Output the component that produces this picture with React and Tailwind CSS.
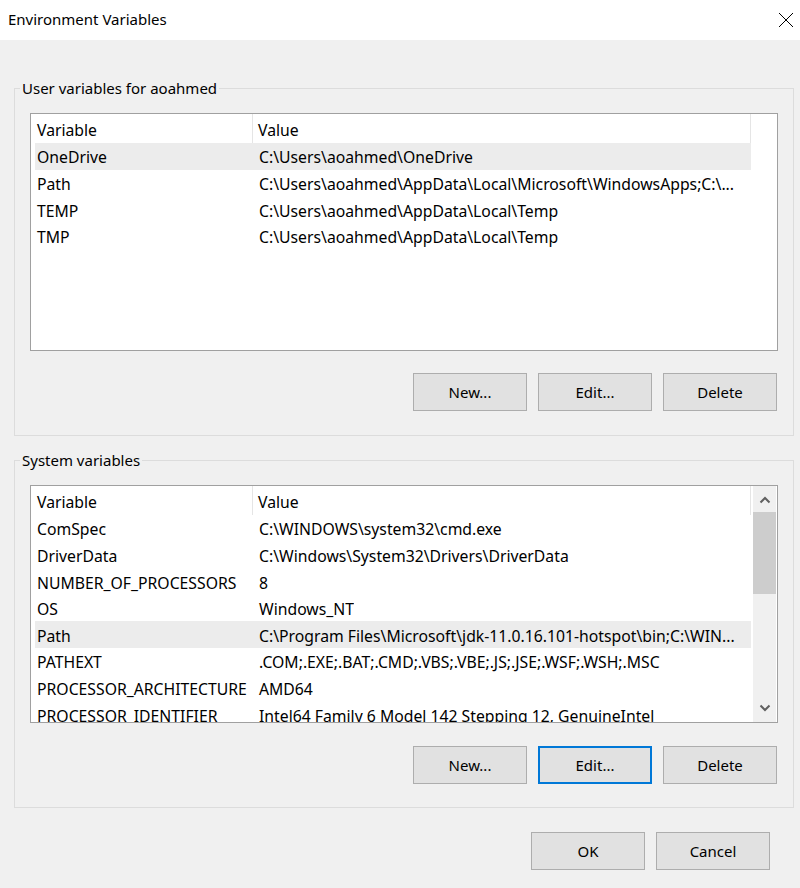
import React from "react";

const font = { fontFamily: '"Noto Sans", "Open Sans", Arial, sans-serif' };

function Btn({ children, focused }) {
  return (
    <button
      className={
        focused
          ? "w-[114px] h-[38px] bg-[#e1e1e1] border border-[#0078d7] outline outline-1 outline-[#0078d7] outline-offset-[-2px] text-[15px] text-black leading-none"
          : "w-[114px] h-[38px] bg-[#e1e1e1] border border-[#adadad] text-[15px] text-black leading-none"
      }
    >
      {children}
    </button>
  );
}

function Row({ name, value, selected }) {
  return (
    <div
      className={
        selected
          ? "flex h-[26.6px] items-center bg-[#ececec] ml-[4px] w-[716px] pt-[4px]"
          : "flex h-[26.6px] items-center ml-[4px] w-[716px] pt-[4px]"
      }
    >
      <div className="w-[218px] pl-[2px] whitespace-nowrap overflow-hidden">{name}</div>
      <div className="pl-[6px] whitespace-nowrap overflow-hidden">{value}</div>
    </div>
  );
}

function Header() {
  return (
    <div className="flex h-[29px] items-center ml-[4px] w-[716px] bg-white">
      <div className="w-[218px] pl-[2px] pt-[5px] h-full flex items-center border-r border-[#e5e5e5]">Variable</div>
      <div className="flex-1 pl-[5px] pt-[5px] h-full flex items-center border-r border-[#e5e5e5]">Value</div>
    </div>
  );
}

function Chevron({ up }) {
  return (
    <svg width="12" height="8" viewBox="0 0 12 8">
      <path
        d={up ? "M1.5 6.5 L6 2 L10.5 6.5" : "M1.5 1.5 L6 6 L10.5 1.5"}
        fill="none"
        stroke="#606060"
        strokeWidth="2"
      />
    </svg>
  );
}

function Group({ title, children, mt }) {
  return (
    <fieldset className={`${mt} ml-[14px] w-[780px] border border-[#dcdcdc]`}>
      <legend className="ml-[5px] px-[2px] text-[15px] leading-[21px] text-black">{title}</legend>
      {children}
    </fieldset>
  );
}

export default function App() {
  const userRows = [
    ["OneDrive", "C:\\Users\\aoahmed\\OneDrive", true],
    ["Path", "C:\\Users\\aoahmed\\AppData\\Local\\Microsoft\\WindowsApps;C:\\..."],
    ["TEMP", "C:\\Users\\aoahmed\\AppData\\Local\\Temp"],
    ["TMP", "C:\\Users\\aoahmed\\AppData\\Local\\Temp"],
  ];
  const sysRows = [
    ["ComSpec", "C:\\WINDOWS\\system32\\cmd.exe"],
    ["DriverData", "C:\\Windows\\System32\\Drivers\\DriverData"],
    ["NUMBER_OF_PROCESSORS", "8"],
    ["OS", "Windows_NT"],
    ["Path", "C:\\Program Files\\Microsoft\\jdk-11.0.16.101-hotspot\\bin;C:\\WIN...", true],
    ["PATHEXT", ".COM;.EXE;.BAT;.CMD;.VBS;.VBE;.JS;.JSE;.WSF;.WSH;.MSC"],
    ["PROCESSOR_ARCHITECTURE", "AMD64"],
    ["PROCESSOR_IDENTIFIER", "Intel64 Family 6 Model 142 Stepping 12, GenuineIntel"],
  ];

  return (
    <div className="w-[800px] h-[888px] bg-[#f0f0f0] text-black text-[15px] overflow-hidden flex flex-col" style={font}>
      <div className="h-[40px] bg-white flex items-center justify-between shrink-0">
        <div className="pl-[8px] text-[15px] pb-[1px]">Environment Variables</div>
        <svg width="16" height="16" viewBox="0 0 16 16" className="mr-[6px]">
          <path d="M1 1 L15 15 M15 1 L1 15" stroke="#000" strokeWidth="1" fill="none" />
        </svg>
      </div>

      <Group title="User variables for aoahmed" mt="mt-[38px]">
        <div className="px-[15px] pt-[14px] pb-[24px]">
          <div className="h-[238px] bg-white border border-[#a0a0a0] overflow-hidden text-[15.75px]">
            <Header />
            {userRows.map(([n, v, s]) => (
              <Row key={n} name={n} value={v} selected={s} />
            ))}
          </div>
          <div className="flex justify-end gap-[11px] mt-[22px] pr-[1px]">
            <Btn>New...</Btn>
            <Btn>Edit...</Btn>
            <Btn>Delete</Btn>
          </div>
        </div>
      </Group>

      <Group title="System variables" mt="mt-[14px]">
        <div className="px-[15px] pt-[14px] pb-[23px]">
          <div className="h-[238px] bg-white border border-[#a0a0a0] overflow-hidden flex text-[15.75px]">
            <div className="w-[721px] overflow-hidden">
              <Header />
              {sysRows.map(([n, v, s]) => (
                <Row key={n} name={n} value={v} selected={s} />
              ))}
            </div>
            <div className="w-[23px] ml-[1px] bg-[#f0f0f0] flex flex-col items-center">
              <div className="h-[26px] w-full flex items-center justify-center pt-[2px]">
                <Chevron up />
              </div>
              <div className="w-full h-[82px] bg-[#cdcdcd]" />
              <div className="flex-1" />
              <div className="h-[26px] w-full flex items-center justify-center pb-[2px]">
                <Chevron />
              </div>
            </div>
          </div>
          <div className="flex justify-end gap-[11px] mt-[23px] pr-[1px]">
            <Btn>New...</Btn>
            <Btn focused>Edit...</Btn>
            <Btn>Delete</Btn>
          </div>
        </div>
      </Group>

      <div className="flex justify-end gap-[11px] mt-[24px] pr-[30px]">
        <Btn>OK</Btn>
        <Btn>Cancel</Btn>
      </div>
    </div>
  );
}
